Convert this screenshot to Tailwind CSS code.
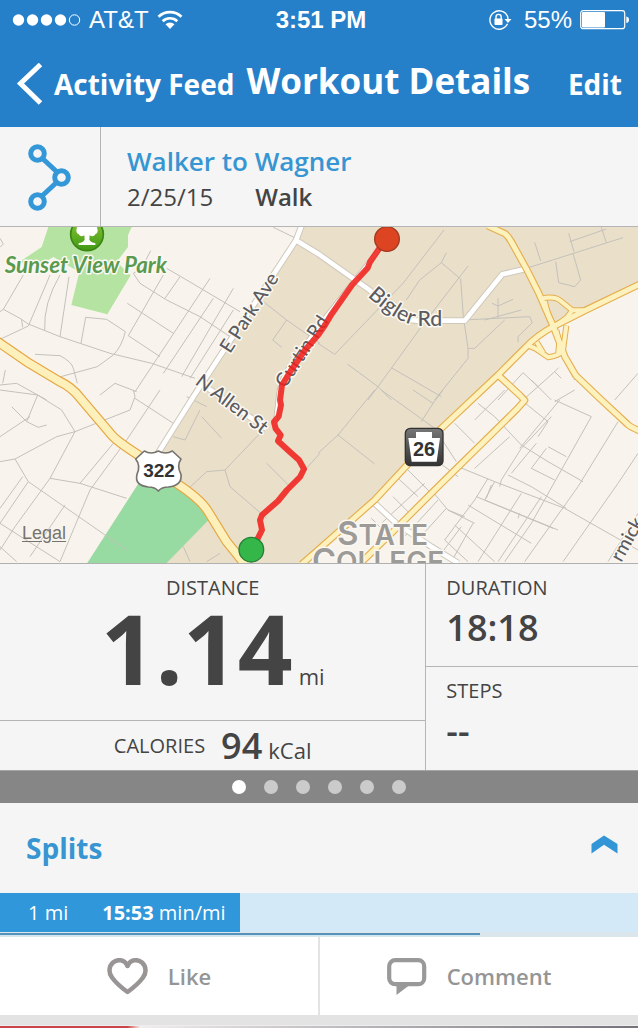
<!DOCTYPE html>
<html lang="en">
<head>
    <meta charset="UTF-8">
    <meta name="viewport" content="width=device-width, initial-scale=1.0">
    <title>Workout Details</title>
    <script src="https://cdn.jsdelivr.net/npm/@tailwindcss/browser@4"></script>
</head>
<body class="bg-[#f5f5f5] text-[#444444] font-['Open_Sans',sans-serif]">

    <!-- Header -->
    <header class="bg-[#2680c9] text-white">
        <div class="grid grid-cols-3 items-center h-10 pl-3 pr-2 text-2xl font-['Liberation_Sans',sans-serif]">
            <div class="flex items-center gap-2">
                <svg class="w-[69px] h-3" viewBox="0 0 69 12" fill="#fff" aria-hidden="true">
                    <circle cx="6.500" cy="6" r="5.700"/><circle cx="20.500" cy="6" r="5.700"/><circle cx="34.500" cy="6" r="5.700"/><circle cx="48.500" cy="6" r="5.700"/>
                    <circle cx="62.500" cy="6" r="5.200" fill="none" stroke="#fff"/>
                </svg>
                <span>AT&amp;T</span>
                <svg class="w-[26px] h-5" viewBox="0 0 26 20" fill="none" stroke="#fff" stroke-width="2.600" aria-hidden="true">
                    <path d="M1.500 6.800a16.500 16.500 0 0 1 23 0M5.700 11.200a10.500 10.500 0 0 1 14.600 0"/>
                    <path d="M8.500 14.300a6.500 6.500 0 0 1 9 0L13 19z" fill="#fff" stroke="none"/>
                </svg>
            </div>
            <div class="text-center font-bold">3:51 PM</div>
            <div class="flex items-center justify-end gap-2">
                <svg class="w-6 h-5 mr-1" viewBox="0 0 24 20" fill="none" stroke="#fff" stroke-width="1.400" aria-hidden="true">
                    <path d="M19.500 13.800A9.200 9.200 0 1 1 19.600 6.500L20 9"/>
                    <path d="M16.500 9h7L20 13z" fill="#fff" stroke="none"/>
                    <rect x="6.500" y="8.500" width="8" height="6.500" rx="0.800" fill="#fff" stroke="none"/>
                    <path d="M8 9V7a2.600 2.600 0 0 1 5.200 0v2"/>
                </svg>
                <span>55%</span>
                <svg class="w-[50px] h-5" viewBox="0 0 50 20" aria-hidden="true">
                    <rect x="0.700" y="0.700" width="44" height="18" rx="2.500" fill="none" stroke="#fff" stroke-width="1.200"/>
                    <rect x="2" y="2" width="23" height="15.400" rx="1" fill="#fff"/>
                    <path d="M46.300 6.500q2.700.5 2.700 3.300t-2.700 3.300z" fill="#fff"/>
                </svg>
            </div>
        </div>
        <nav class="flex items-center h-[87px] px-4 font-bold whitespace-nowrap">
            <button class="flex items-center gap-2 text-[28px]">
                <svg class="w-[30px] h-[42px]" viewBox="0 0 30 42" fill="none" stroke="#fff" stroke-width="5" aria-hidden="true"><path d="M24.500 1.500 4.500 20.500 24.500 40"/></svg>
                <span>Activity Feed</span>
            </button>
            <h1 class="text-[35px] pb-1 pl-3">Workout Details</h1>
            <button class="text-[28px] ml-auto">Edit</button>
        </nav>
    </header>

    <!-- Workout name -->
    <section class="flex h-[100px] border-b border-[#b5b5b5]">
        <div class="w-[101px] border-r border-[#b5b5b5] flex items-center justify-center">
            <svg class="w-11 h-[68px]" viewBox="0 0 44 68" fill="none" stroke="#3498d8" stroke-width="5" aria-hidden="true">
                <path d="M14 15 29 29M14 53 29 39"/>
                <circle cx="9.500" cy="10.500" r="6.800"/><circle cx="33.500" cy="34.500" r="6.800"/><circle cx="9.500" cy="58.500" r="6.800"/>
            </svg>
        </div>
        <div class="pl-[26px] pt-4">
            <h2 class="text-[26px] leading-9 font-semibold text-[#3795d2]">Walker to Wagner</h2>
            <p class="text-2xl leading-9 flex gap-[42px]"><span>2/25/15</span><span class="font-semibold">Walk</span></p>
        </div>
    </section>

    <!-- Map -->
    <section class="relative border-b border-[#b0b0b0]">
        <svg class="block w-full h-auto font-[Lato,sans-serif]" viewBox="0 0 1914 1008" role="img" aria-label="Map of the route">
            <defs>
                <g id="highway"><path d="M-10 342 80 404 180 464Q215 480 240 512L335 624Q350 642 415 684L530 769Q600 815 622 850L680 944 735 1012"/></g>
                <g id="main-roads">
                    <path d="M1463-4 1515 20Q1525 28 1534 44L1579 125 1617 200 1663 306 1695 390 1727 445 1800 515 1885 594Q1895 602 1920 612"/>
                    <path d="M1920 171 1754 251 1659 299Q1610 325 1576 362L1494 444 1324 604 1124 819 954 969 905 1012"/>
                    <path d="M1494 444 1560 505 1574 520 1550 547 1314 779 1184 909 1080 1010"/>
                </g>
                <g id="ramps">
                    <path d="M1624 215Q1660 206 1680 220L1717 250H1754M1634 222 1645 265 1663 299M1717 250 1700 272 1663 299M1699 296 1689 370Q1680 386 1645 391L1607 365 1585 356M1610 345 1630 378M1669 310 1678 345 1674 385"/>
                </g>
                <g id="streets">
                    <path d="M905-5 888 40 580 509 470 685M888 40 954 80 1060 155 1110 190Q1200 281 1250 281H1394L1507 142 1579 125"/>
                    <path d="M590 460 800 605M1124 829 1189 889 1294 959 1374 1008"/>
                </g>
                <path id="bigler" d="M1102 207Q1200 297 1265 298H1400"/>
                <linearGradient id="sign" x2="0" y2="1"><stop stop-color="#777"/><stop offset="1" stop-color="#333"/></linearGradient>
                <linearGradient id="park" x2="0" y2="1"><stop stop-color="#8cc63a"/><stop offset="1" stop-color="#3f9a12"/></linearGradient>
            </defs>

            <!-- land -->
            <rect width="1914" height="1008" fill="#f8f4ed"/>
            <path fill="#eadfc9" d="M905 0 470 690 412 775 262 1008H905L1124 819 1324 604 1494 444 1659 299 1914 174V0z"/>
            <path fill="#b5e3a2" d="M145 0H395L384 25V60L350 105 392 145 322 262 214 234 238 135 160 90 110 120 58 105 125 60z"/>
            <path fill="#98dba2" d="M412 775 262 1008H500L625 880 600 820 530 769 450 720z"/>

            <!-- minor streets -->
            <g fill="none" stroke="#c4c1bc" stroke-width="3">
                <g transform="translate(0 -21)">
                    <path d="M70 165 10 268 0 275M10 268 60 295 85 312 180 350 330 400 455 430 585 475M0 358 85 318 150 165M65 300 68 322M180 165Q130 250 134 330M207 170 180 350M243 370 257 292 320 298 376 335Q365 380 340 405L292 440 175 472M105 403 180 407Q215 425 220 445L232 490M0 55 10 72 0 82"/>
                    <path d="M452 92 425 145 400 160 420 190 500 240 600 290 690 350M490 165 385 347 480 410M382 250 520 340M540 170 495 235M500 145 560 180 720 275M630 175 455 440M700 205 545 470M700 270 570 475M640 235 490 460M820 22 888 55M790 245 860 300 960 370M860 300 818 360 845 382M0 495 50 490 140 540M405 515 455 440M16 450 8 490M300 525 345 490 410 515"/>
                </g>
                <g transform="translate(954 -21)">
                    <path d="M378 30 255 190 50 403 0 370M385 98 370 128 305 180 265 240M370 128 428 177 436 290 450 385 450 415 350 540M450 138 310 320 180 500 150 540M450 385 470 385 560 300M436 300 635 290 643 308 600 350V367M540 235V295M522 250 540 258 585 238M500 300 610 270M88 432 180 500 220 540M220 443 370 530M625 145 915 53M752 40 768 95M755 65 865 27M850 22 865 68M650 67 668 123M713 125 722 188 770 200 788 180 765 100"/>
                    <path d="M540 540 615 458 660 500M615 540 710 455 730 475M710 455 722 443M640 480 700 540M768 480 775 465M960 460 890 540"/>
                </g>
                <g transform="translate(0 489)">
                    <path d="M35 50 80 95 113 15 0 0M113 15 185 60 225 125M80 95 115 112 140 105M0 140 90 80M225 125 150 265 45 410 0 480M225 125 170 140 45 207 0 215M225 125 390 60 405 20 400 0M45 207 85 275 380 480M68 260 0 355M85 275 0 400M150 265 240 280 380 325M240 280 340 160M480 0 380 150 270 300 180 515M405 25 520 100M195 345 90 500M0 400 180 515M0 470 50 515M600 60 555 150 520 140M605 80 665 145M560 20 620 50M780 130 675 240 620 245 550 310M675 240 690 290 800 385M800 220 870 290M960 190 860 300M550 470 570 515M620 515 660 490"/>
                </g>
                <g transform="translate(954 489)">
                    <path d="M190 0 350 115 415 215M60 135 170 222M170 0 60 135 0 190M285 0 345 40 310 95M375 0 345 40M480 40 530 80 610 165 690 215M410 100 470 160M560 0 470 90M610 30 690 95 660 140M420 230 530 275 740 355 960 480M575 140 470 235M700 80 610 175 550 270 545 290"/>
                    <path d="M710 30 820 80M725 30 605 175M900 95 780 290 620 515M820 80 640 400 560 515M770 0 710 35M690 170 745 200M685 175 640 235 710 270M655 160 580 250M690 215 795 275M570 255 640 290 745 355M530 275 500 330 720 420M475 320 705 415M450 345 640 460M410 405 530 515M510 265 470 330 380 450M610 310 480 515M670 320 540 515M520 285 505 325M600 385 605 370M960 190 900 280 735 515M960 370 870 515M390 360 470 400M385 355 290 460M340 300 390 360 440 380M360 330 250 450M380 450 450 515M430 410 370 490M465 400 400 515M270 240 340 310M240 265 300 320M225 320 270 365M320 280 190 400M360 215 420 260M160 385 190 415"/>
                </g>
            </g>

            <!-- roads -->
            <g fill="none" stroke-linejoin="round">
                <use href="#streets" stroke="#cfc8bc" stroke-width="20"/>
                <path d="M1150 50 960 290 860 430Q835 470 832 530L825 590" stroke="#c6bfb2" stroke-width="13"/>
                <path d="M1150 50 960 290 860 430Q835 470 832 530L825 590" stroke="#fff" stroke-width="8"/>
                <use href="#streets" stroke="#fff" stroke-width="14"/>
                <use href="#ramps" stroke="#e5af51" stroke-width="18"/>
                <use href="#main-roads" stroke="#e5af51" stroke-width="22"/>
                <use href="#highway" stroke="#e5a643" stroke-width="30"/>
                <use href="#ramps" stroke="#fdf2bd" stroke-width="12"/>
                <use href="#main-roads" stroke="#fdf2bd" stroke-width="15"/>
                <use href="#highway" stroke="#fdf0bb" stroke-width="23"/>
            </g>

            <!-- labels -->
            <g fill="#5c5c60" stroke="#fbf8f2" stroke-width="9" stroke-linejoin="round" paint-order="stroke" font-size="58" font-weight="500">
                <text transform="translate(690 382) rotate(-57)">E Park Ave</text>
                <text transform="translate(583 470) rotate(37)">N Allen St</text>
                <text transform="translate(856 486) rotate(-57)">Curtin Rd</text>
                <text font-size="64"><textPath href="#bigler">Bigler Rd</textPath></text>
                <text transform="translate(1864 1008) rotate(-61)">rmick</text>
                <text x="14" y="137" fill="#5a9a4e" font-size="67" font-weight="700" font-style="italic">Sunset View Park</text>
                <g fill="#9d9b98" font-family="Inter, sans-serif" font-size="84" font-weight="600">
                    <text x="1012" y="953"><tspan font-size="98">S</tspan>TATE</text>
                    <text x="936" y="1036"><tspan font-size="98">C</tspan>OLLEGE</text>
                </g>
            </g>

            <!-- park badge -->
            <circle cx="261" cy="22" r="49" fill="url(#park)" stroke="#3d8614" stroke-width="5"/>
            <path fill="#fff" d="M234-20H288Q296-8 291 2Q297 16 286 22Q280 32 269 25L268 38Q272 46 286 48V54H236V48Q250 46 254 38L253 25Q242 32 236 22Q225 16 231 2Q226-8 234-20z"/>

            <!-- shields -->
            <path d="M433 672q20 12 42 0q22 12 42 0l26 24q-14 20 0 46q4 34-38 38q-20 0-30 12q-10-12-30-12q-42-4-34-38q12-26-4-46z" fill="#fff" stroke="#77736e" stroke-width="5" stroke-linejoin="round"/>
            <text x="477" y="749" text-anchor="middle" font-family="Liberation Sans, sans-serif" font-size="57" font-weight="700" fill="#333">322</text>
            <rect x="1216" y="604" width="113" height="112" rx="15" fill="url(#sign)" stroke="#333" stroke-width="4"/>
            <path fill="#fff" d="M1248 615h48v18h24l-10 71h-75l-10-71h23z"/>
            <text x="1272" y="686" text-anchor="middle" font-family="Liberation Sans, sans-serif" font-size="60" font-weight="700" fill="#333">26</text>

            <!-- walked route -->
            <path fill="none" stroke="#f0201c" stroke-opacity="0.870" stroke-width="18" stroke-linejoin="round" d="M1161 33 1134 70 1110 105 1103 123 1056 174 1014 234 993 264 975 295 954 325 915 369 870 435 846 474 840 519 843 534 836 568 822 585 827 605 842 624 834 642 870 675 897 699 912 726 900 750 861 789 834 822 786 864 780 879 786 909 774 933 756 966"/>
            <circle cx="1161" cy="36" r="37" fill="#dd4421" stroke="#a13a22" stroke-width="4"/>
            <circle cx="754" cy="968" r="37" fill="#34b748" stroke="#24803a" stroke-width="4"/>
        </svg>
        <a href="#" class="absolute left-[22px] bottom-4 text-lg underline underline-offset-2 text-[#77736e] font-['Liberation_Sans',sans-serif]">Legal</a>
    </section>

    <!-- Stats -->
    <section class="grid grid-cols-3">
        <div class="col-span-2 flex flex-col">
            <div class="flex-1 text-center pt-2">
                <h3 class="text-xl leading-8">DISTANCE</h3>
                <p class="flex items-baseline justify-center gap-1.5"><span class="text-8xl leading-[88px] font-bold">1.14</span> <span class="text-[22px] leading-8">mi</span></p>
            </div>
            <div class="flex items-center justify-center gap-4 h-[50px] border-t border-[#b5b5b5]">
                <h3 class="text-xl">CALORIES</h3>
                <p class="flex items-baseline gap-1.5"><span class="text-4xl leading-[48px] font-semibold">94</span> <span class="text-[22px] leading-8">kCal</span></p>
            </div>
        </div>
        <div class="border-l border-[#b5b5b5]">
            <div class="h-[103px] pl-5 pt-2 border-b border-[#b5b5b5]">
                <h3 class="text-xl leading-8">DURATION</h3>
                <p class="text-4xl leading-[48px] font-semibold">18:18</p>
            </div>
            <div class="h-[103px] pl-5 pt-2">
                <h3 class="text-xl leading-8">STEPS</h3>
                <p class="text-4xl leading-[48px] font-semibold">--</p>
            </div>
        </div>
    </section>

    <!-- Pager -->
    <div class="flex items-center justify-center gap-[18px] h-[33px] bg-[#868686] border-t border-[#a5a5a5]">
        <span class="size-[14px] rounded-full bg-white"></span>
        <span class="size-[14px] rounded-full bg-[#cbcbcb]"></span>
        <span class="size-[14px] rounded-full bg-[#cbcbcb]"></span>
        <span class="size-[14px] rounded-full bg-[#cbcbcb]"></span>
        <span class="size-[14px] rounded-full bg-[#cbcbcb]"></span>
        <span class="size-[14px] rounded-full bg-[#cbcbcb]"></span>
    </div>

    <!-- Splits -->
    <section>
        <button class="flex items-center justify-between w-full h-[90px] pl-[26px] pr-5 text-[#3795d2]">
            <span class="text-[28px] font-bold">Splits</span>
            <svg class="w-[27px] h-[19px] mb-2" viewBox="0 0 27 19" fill="#3295d6" aria-hidden="true"><path d="M.5 9 13 0.500 26.500 9v9.500L13 9.800.5 18.500z"/></svg>
        </button>
        <div class="bg-[#d4e9f7]">
            <div class="flex items-center gap-[34px] h-[39px] pl-7 bg-[#2f97da] text-white text-xl whitespace-nowrap" style="width: 37.6%">
                <span>1 mi</span>
                <span><b>15:53</b> min/mi</span>
            </div>
        </div>
        <div class="h-[5px] pt-px bg-[#dbe6ec]">
            <div class="h-[3px] bg-[#5790b8] border-b border-[#cfe6f6]" style="width: 75.2%"></div>
        </div>
    </section>

    <!-- Actions -->
    <footer class="bg-[#e3e3e3]">
        <div class="grid grid-cols-2 gap-[2px] h-[78px] text-[22px] font-semibold text-[#959595]">
            <button class="flex items-center justify-center gap-5 bg-white">
                <svg class="w-[41px] h-[37px]" viewBox="0 0 41 37" fill="none" stroke="#999595" stroke-width="4.500" stroke-linejoin="round" aria-hidden="true"><path d="M20.500 8C17.500 1 10 1 6 4.500 1.500 8.500 1.500 15 5 19.500 9 25 15 30 20.500 34 26 30 32 25 36 19.500 39.500 15 39.500 8.500 35 4.500 31 1 23.500 1 20.500 8z"/></svg>
                <span>Like</span>
            </button>
            <button class="flex items-center justify-center gap-5 pr-5 bg-white">
                <svg class="w-10 h-[37px]" viewBox="0 0 40 37" fill="none" stroke="#999" stroke-width="4.200" aria-hidden="true"><rect x="2.200" y="2.200" width="35" height="24" rx="6"/><path d="M9.500 27.500V37L22 27.500z" fill="#999" stroke="none"/></svg>
                <span>Comment</span>
            </button>
        </div>
        <div class="h-[10px]"></div>
        <div class="h-[3px] bg-linear-to-r from-[#c9474a] from-20% via-[#f1eeee] via-22% to-[#77727a] border-t border-[#eeeeee]"></div>
    </footer>

</body>
</html>
